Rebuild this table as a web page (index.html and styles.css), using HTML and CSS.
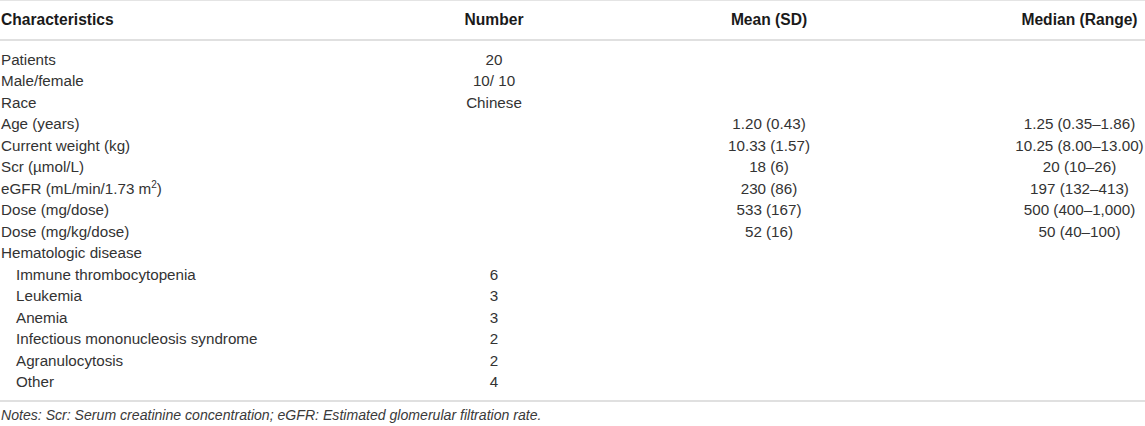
FILE: index.html
```html
<!DOCTYPE html>
<html lang="en">
<head>
<meta charset="utf-8">
<title>Patient characteristics</title>
<link rel="stylesheet" href="styles.css">
</head>
<body>
<div class="wrap">
  <div class="table">
    <div class="row head">
      <div class="c1">Characteristics</div>
      <div class="c2">Number</div>
      <div class="c3">Mean (SD)</div>
      <div class="c4">Median (Range)</div>
    </div>
    <div class="body">
      <div class="row"><div class="c1">Patients</div><div class="c2">20</div><div class="c3"></div><div class="c4"></div></div>
      <div class="row"><div class="c1">Male/female</div><div class="c2">10/ 10</div><div class="c3"></div><div class="c4"></div></div>
      <div class="row"><div class="c1">Race</div><div class="c2">Chinese</div><div class="c3"></div><div class="c4"></div></div>
      <div class="row"><div class="c1">Age (years)</div><div class="c2"></div><div class="c3">1.20 (0.43)</div><div class="c4">1.25 (0.35–1.86)</div></div>
      <div class="row"><div class="c1">Current weight (kg)</div><div class="c2"></div><div class="c3">10.33 (1.57)</div><div class="c4">10.25 (8.00–13.00)</div></div>
      <div class="row"><div class="c1">Scr (µmol/L)</div><div class="c2"></div><div class="c3">18 (6)</div><div class="c4">20 (10–26)</div></div>
      <div class="row"><div class="c1">eGFR (mL/min/1.73 m<sup>2</sup>)</div><div class="c2"></div><div class="c3">230 (86)</div><div class="c4">197 (132–413)</div></div>
      <div class="row"><div class="c1">Dose (mg/dose)</div><div class="c2"></div><div class="c3">533 (167)</div><div class="c4">500 (400–1,000)</div></div>
      <div class="row"><div class="c1">Dose (mg/kg/dose)</div><div class="c2"></div><div class="c3">52 (16)</div><div class="c4">50 (40–100)</div></div>
      <div class="row"><div class="c1">Hematologic disease</div><div class="c2"></div><div class="c3"></div><div class="c4"></div></div>
      <div class="row sub"><div class="c1">Immune thrombocytopenia</div><div class="c2">6</div><div class="c3"></div><div class="c4"></div></div>
      <div class="row sub"><div class="c1">Leukemia</div><div class="c2">3</div><div class="c3"></div><div class="c4"></div></div>
      <div class="row sub"><div class="c1">Anemia</div><div class="c2">3</div><div class="c3"></div><div class="c4"></div></div>
      <div class="row sub"><div class="c1">Infectious mononucleosis syndrome</div><div class="c2">2</div><div class="c3"></div><div class="c4"></div></div>
      <div class="row sub"><div class="c1">Agranulocytosis</div><div class="c2">2</div><div class="c3"></div><div class="c4"></div></div>
      <div class="row sub"><div class="c1">Other</div><div class="c2">4</div><div class="c3"></div><div class="c4"></div></div>
    </div>
  </div>
  <p class="notes">Notes: Scr: Serum creatinine concentration; eGFR: Estimated glomerular filtration rate.</p>
</div>
</body>
</html>
```
FILE: styles.css
```css
html, body {
  margin: 0;
  padding: 0;
  background: #ffffff;
}

body {
  font-family: "Liberation Sans", Arial, Helvetica, sans-serif;
  font-size: 15.2px;
  color: #333333;
}

.wrap {
  display: flex;
  flex-direction: column;
  width: 1145px;
}

.table {
  display: flex;
  flex-direction: column;
  border-top: 1px solid #e4e4e4;
  border-bottom: 2px solid #e0e0e0;
}

.row {
  display: grid;
  grid-template-columns: 434px 120px 430px 161px;
  line-height: 21.47px;
  white-space: nowrap;
}

.head {
  height: 38px;
  align-items: center;
  font-weight: bold;
  font-size: 15.6px;
  color: #1a1a1a;
  border-bottom: 2px solid #e0e0e0;
}

.body {
  display: flex;
  flex-direction: column;
  padding: 8px 0 7px;
}

.c1 {
  padding-left: 1px;
}

.sub .c1 {
  padding-left: 16px;
}

.c2, .c3 {
  text-align: center;
}

.c2 .num, .c3 .num {
  font-variant-numeric: tabular-nums;
}

.c4 {
  text-align: center;
  padding-left: 30px;
}

sup {
  font-size: 10px;
  line-height: 0;
  vertical-align: 6px;
}

.notes {
  margin: 3px 0 0;
  padding-left: 1px;
  font-size: 14.1px;
  font-style: italic;
  line-height: 21.5px;
  color: #3a3a3a;
}
```
